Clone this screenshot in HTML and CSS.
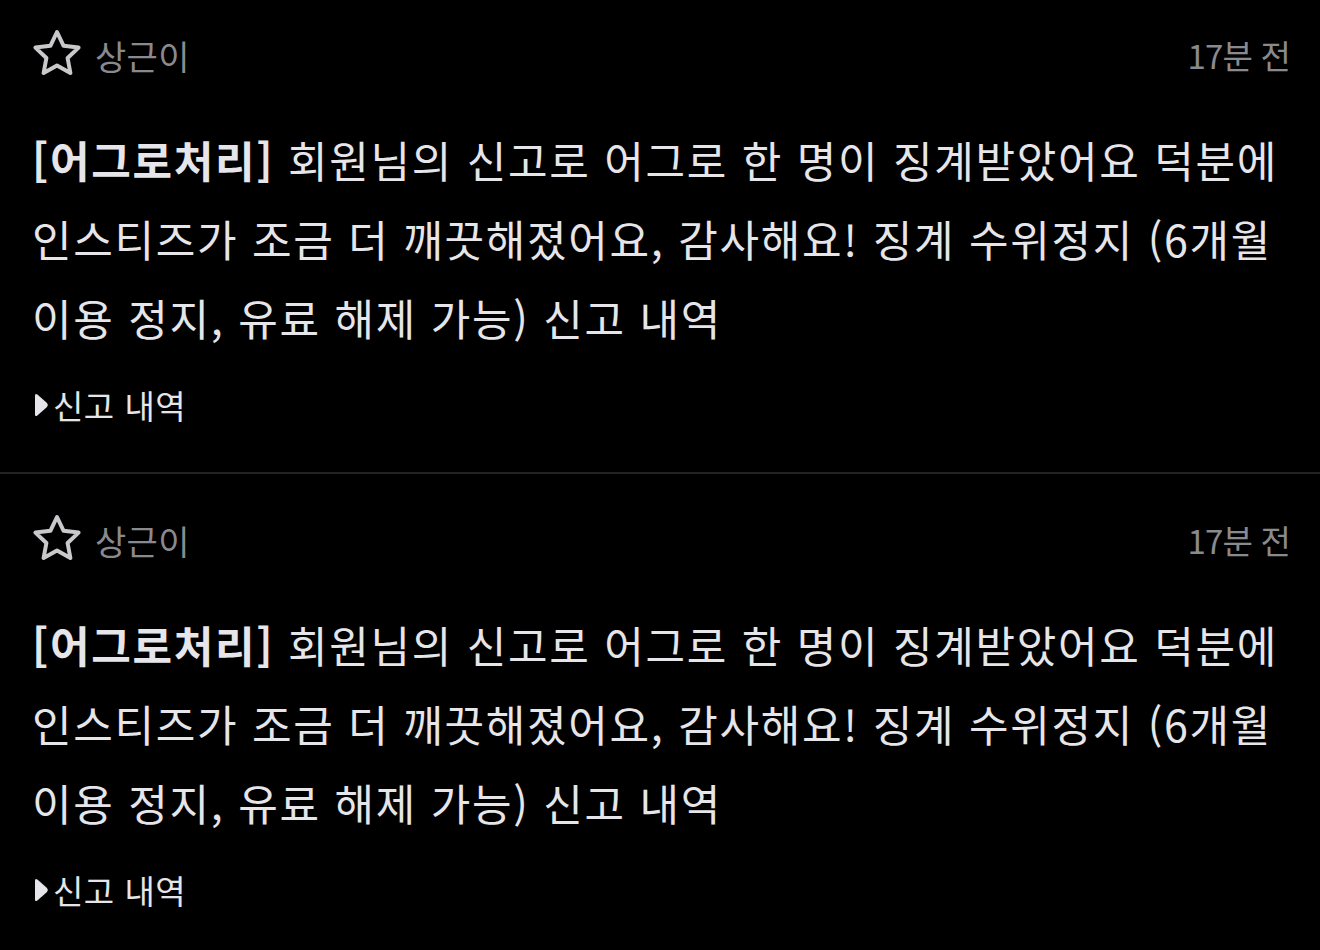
FILE: index.html
```html
<!DOCTYPE html>
<html lang="ko">
<head>
<meta charset="utf-8">
<link rel="stylesheet" href="styles.css">
</head>
<body>
<div class="feed">
  <article class="item">
    <div class="head">
      <div class="who">
        <svg class="star" viewBox="0 0 50 48" width="50" height="48"><path d="M25 3 L31.6 16.8 L46.6 18.6 L35.6 29 L38.4 44 L25 36.6 L11.6 44 L14.4 29 L3.4 18.6 L18.4 16.8 Z" fill="none" stroke="#c9c9cc" stroke-width="4" stroke-linejoin="round"/></svg>
        <span class="name">상근이</span>
      </div>
      <span class="time">17분 전</span>
    </div>
    <p class="body"><b>[어그로처리]</b> 회원님의 신고로 어그로 한 명이 징계받았어요 덕분에<br>인스티즈가 조금 더 깨끗해졌어요, 감사해요! 징계 수위정지 (6개월<br>이용 정지, 유료 해제 가능) 신고 내역</p>
    <div class="details"><svg class="tri" viewBox="0 0 16 26" width="16" height="26"><path d="M2 3.5 Q2 1 4.4 2.6 L14 11 Q15.8 13 14 15 L4.4 23.4 Q2 25 2 22.5 Z" fill="#e5e5ea"/></svg><span>신고 내역</span></div>
  </article>
  <article class="item">
    <div class="head">
      <div class="who">
        <svg class="star" viewBox="0 0 50 48" width="50" height="48"><path d="M25 3 L31.6 16.8 L46.6 18.6 L35.6 29 L38.4 44 L25 36.6 L11.6 44 L14.4 29 L3.4 18.6 L18.4 16.8 Z" fill="none" stroke="#c9c9cc" stroke-width="4" stroke-linejoin="round"/></svg>
        <span class="name">상근이</span>
      </div>
      <span class="time">17분 전</span>
    </div>
    <p class="body"><b>[어그로처리]</b> 회원님의 신고로 어그로 한 명이 징계받았어요 덕분에<br>인스티즈가 조금 더 깨끗해졌어요, 감사해요! 징계 수위정지 (6개월<br>이용 정지, 유료 해제 가능) 신고 내역</p>
    <div class="details"><svg class="tri" viewBox="0 0 16 26" width="16" height="26"><path d="M2 3.5 Q2 1 4.4 2.6 L14 11 Q15.8 13 14 15 L4.4 23.4 Q2 25 2 22.5 Z" fill="#e5e5ea"/></svg><span>신고 내역</span></div>
  </article>
</div>
</body>
</html>
```

FILE: styles.css
```css
html, body {
  margin: 0;
  padding: 0;
  background: #000;
}
body {
  font-family: "Noto Sans CJK KR", "Noto Sans", sans-serif;
  color: #e5e5ea;
  overflow: hidden;
}
.feed {
  margin-top: -11px;
}
.item {
  padding: 41px 30px 42px 32px;
  border-bottom: 2px solid #222225;
}
.head {
  height: 50px;
  display: flex;
  align-items: center;
  justify-content: space-between;
}
.who {
  display: flex;
  align-items: center;
  gap: 13px;
}
.star {
  display: block;
  margin-top: -4px;
}
.name, .time {
  font-size: 34px;
  color: #8a8a8e;
  letter-spacing: 0.3px;
}
.time {
  font-size: 33px;
  letter-spacing: -0.8px;
}
.body {
  margin: 40px 0 0 0;
  font-size: 43px;
  line-height: 79px;
  letter-spacing: 1.7px;
  white-space: nowrap;
}
.body b {
  font-weight: 700;
}
.details {
  margin-top: 23px;
  height: 50px;
  display: flex;
  align-items: center;
  gap: 4px;
  font-size: 33px;
  letter-spacing: 0.5px;
  padding-left: 1px;
}
.tri {
  display: block;
}
```
